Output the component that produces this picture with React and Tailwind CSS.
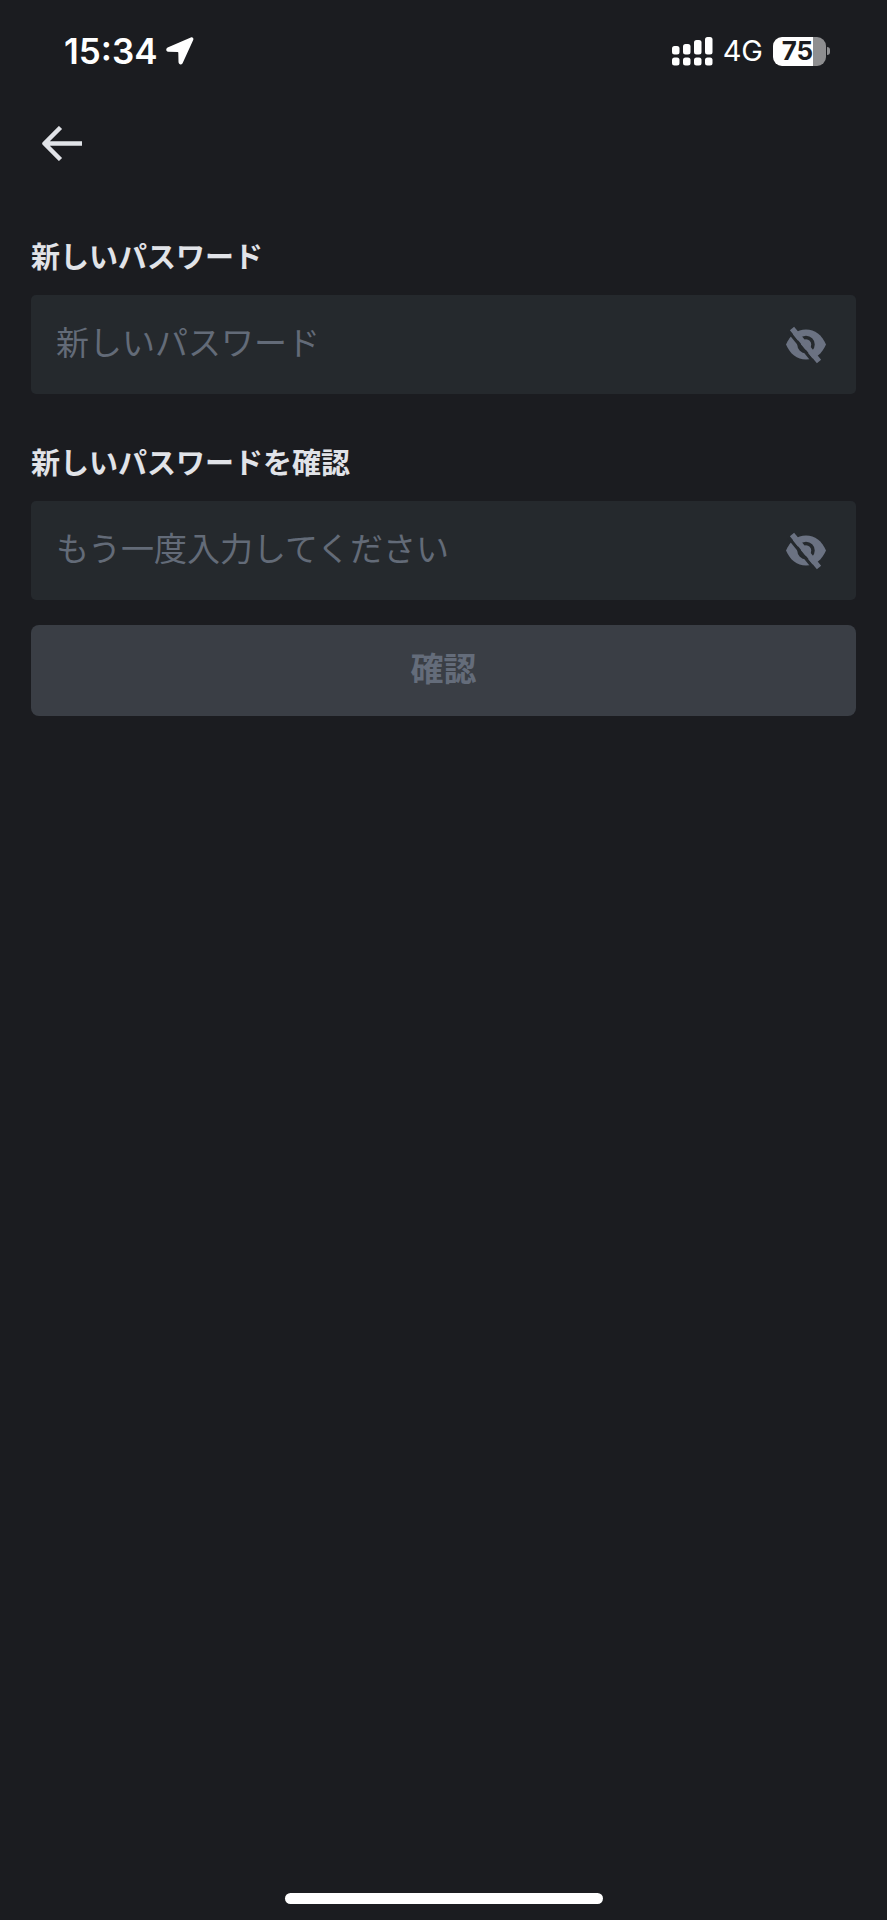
import React, { useState } from 'react';

const BARS = [
  { x: 0, top: 9 },
  { x: 11, top: 7 },
  { x: 22, top: 3 },
  { x: 33, top: 0 },
];

function StatusBar() {
  return (
    <div className="flex items-center justify-between pl-16 pr-[57px] pt-8 text-white">
      <div className="flex items-center gap-2">
        <span className="text-[35px] leading-[38px] font-semibold">15:34</span>
        <svg width="28" height="28" viewBox="0 0 28 28" fill="currentColor" aria-hidden="true">
          <path d="M24.800.5 1.600 10.600C-.4 11.500-.1 14.600 2.100 14.700L11.600 14.900Q12.300 14.900 12.300 15.600L12.500 25C12.700 27.800 15.600 28.200 16.700 25.900L27.200 3C27.900 1.200 26.500-.2 24.800.5Z" />
        </svg>
      </div>
      <div className="flex items-center gap-2.5">
        <svg width="41" height="29" viewBox="0 0 41 29" fill="currentColor" aria-hidden="true">
          {BARS.map(b => (
            <g key={b.x}>
              <rect x={b.x} y={b.top} width="7.500" height={17.500 - b.top} rx="2.500" />
              <rect x={b.x} y="20.500" width="7.500" height="8" rx="2.500" />
            </g>
          ))}
        </svg>
        <span className="text-[29px] leading-9">4G</span>
        <div className="flex items-center gap-px">
          <div className="flex h-[29px] w-[53px] items-center justify-center rounded-[9px] bg-linear-to-r from-white from-75% to-[#8e8e90] to-75% pr-1 text-[26px] leading-none font-bold text-[#1b1c20]">
            75
          </div>
          <div className="h-2 w-[3px] rounded-r-full bg-[#8e8e90]" />
        </div>
      </div>
    </div>
  );
}

function EyeOff() {
  return (
    <svg width="40" height="38" viewBox="0 0 40 38" fill="none" aria-hidden="true">
      <path d="M0 18.500C4 9 11 3.500 20 3.500S36 9 40 18.500C36 28 29 33.500 20 33.500S4 28 0 18.500Z" fill="#6b7282" />
      <path d="M20 11.500a7 7 0 0 1 0 14a7 7 0 0 1 0-14Z" stroke="#25292d" strokeWidth="3.500" />
      <path d="M3 6 27.500 36" stroke="#25292d" strokeWidth="3" />
      <path d="M6 2.500 33 35.500" stroke="#6b7282" strokeWidth="5.500" />
    </svg>
  );
}

function PasswordField({ id, label, placeholder }) {
  const [value, setValue] = useState('');
  const [visible, setVisible] = useState(false);

  return (
    <div>
      <label htmlFor={id} className="block text-[29px] leading-10 font-bold text-[#e1e3e8]">{label}</label>
      <div className="mt-[17px] flex h-[99px] items-center rounded-[5px] bg-[#25292d] pr-[30px] pl-[25px]">
        <input
          id={id}
          type={visible ? 'text' : 'password'}
          className="min-w-0 flex-1 bg-transparent pb-1 text-[33px] leading-12 text-[#e1e3e8] outline-none placeholder:text-[#636b78]"
          placeholder={placeholder}
          value={value}
          onChange={e => setValue(e.target.value)}
        />
        <button type="button" aria-label="パスワードを表示" onClick={() => setVisible(!visible)}>
          <EyeOff />
        </button>
      </div>
    </div>
  );
}

export default function App() {
  return (
    <div className="flex min-h-screen flex-col bg-[#1b1c20] font-[Inter,'Noto_Sans_CJK_JP',sans-serif]">
      <StatusBar />
      <header className="flex px-[42px] pt-14">
        <button type="button" aria-label="戻る" className="text-[#e1e3e8]">
          <svg width="40" height="35" viewBox="0 0 40 35" fill="none" stroke="currentColor" strokeWidth="4.500" strokeLinejoin="round" aria-hidden="true">
            <path d="M18.500 1.500 2.500 17.500 18.500 33.500M3 17.500H40" />
          </svg>
        </button>
      </header>
      <form className="flex flex-1 flex-col px-[31px] pt-[77px]" onSubmit={e => e.preventDefault()}>
        <div className="space-y-[50px]">
          <PasswordField id="password" label="新しいパスワード" placeholder="新しいパスワード" />
          <PasswordField id="confirm" label="新しいパスワードを確認" placeholder="もう一度入力してください" />
        </div>
        <button type="submit" disabled className="mt-[25px] flex h-[91px] items-center justify-center rounded-lg bg-[#3a3e45] pb-0.5 text-[33px] font-bold text-[#646c7a]">
          確認
        </button>
      </form>
      <div className="mx-auto mb-4 h-[11px] w-[318px] rounded-full bg-white" />
    </div>
  );
}
